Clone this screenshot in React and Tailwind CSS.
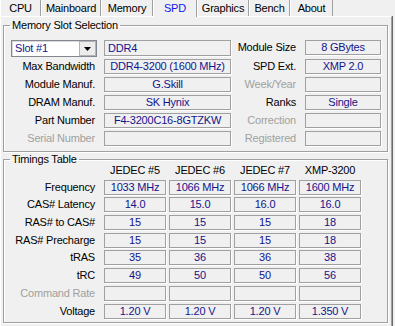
import React from "react";

const tabs = [
  { name: "CPU", w: "w-[41px]" },
  { name: "Mainboard", w: "w-[60px]" },
  { name: "Memory", w: "w-[52px]" },
  { name: "SPD", w: "w-[44px]", active: true },
  { name: "Graphics", w: "w-[52px]" },
  { name: "Bench", w: "w-[41px]" },
  { name: "About", w: "w-[43px]" },
];

const slotRows = [
  { label: "Max Bandwidth", value: "DDR4-3200 (1600 MHz)", rLabel: "SPD Ext.", rValue: "XMP 2.0", gap: "mt-[2px]" },
  { label: "Module Manuf.", value: "G.Skill", rLabel: "Week/Year", rValue: "", rDim: true, gap: "mt-[3px]" },
  { label: "DRAM Manuf.", value: "SK Hynix", rLabel: "Ranks", rValue: "Single", gap: "mt-[3px]" },
  { label: "Part Number", value: "F4-3200C16-8GTZKW", rLabel: "Correction", rValue: "", rDim: true, gap: "mt-[3px]" },
  { label: "Serial Number", value: "", dim: true, rLabel: "Registered", rValue: "", rDim: true, gap: "mt-[3px]" },
];

const timingCols = ["JEDEC #5", "JEDEC #6", "JEDEC #7", "XMP-3200"];

const timingRows = [
  { label: "Frequency", values: ["1033 MHz", "1066 MHz", "1066 MHz", "1600 MHz"], gap: "mt-[3px]" },
  { label: "CAS# Latency", values: ["14.0", "15.0", "16.0", "16.0"], gap: "mt-[2px]" },
  { label: "RAS# to CAS#", values: ["15", "15", "15", "18"], gap: "mt-[3px]" },
  { label: "RAS# Precharge", values: ["15", "15", "15", "18"], gap: "mt-[3px]" },
  { label: "tRAS", values: ["35", "36", "36", "38"], gap: "mt-[2px]" },
  { label: "tRC", values: ["49", "50", "50", "56"], gap: "mt-[3px]" },
  { label: "Command Rate", values: ["", "", "", ""], dim: true, gap: "mt-[3px]" },
  { label: "Voltage", values: ["1.20 V", "1.20 V", "1.20 V", "1.350 V"], gap: "mt-[3px]" },
];

function Field({ children, className = "" }) {
  return (
    <div
      className={`h-[15px] border border-[#a0a0a0] shadow-[1px_1px_0_#fff] flex items-center justify-center whitespace-nowrap text-[#14148c] ${className}`}
    >
      {children}
    </div>
  );
}

function Label({ children, dim, className = "" }) {
  return (
    <div
      className={`text-right whitespace-nowrap pr-[9px] ${dim ? "text-[#a0a0a0]" : "text-black"} ${className}`}
    >
      {children}
    </div>
  );
}

const App = () => {
  return (
    <div className="w-[395px] h-[326px] overflow-hidden bg-[#f0f0f0] font-['Liberation_Sans',Arial,sans-serif] text-[11px] leading-[13px] tracking-[-0.2px] text-black">
      {/* tab strip */}
      <div className="flex items-end h-[16px]">
        {tabs.map((t) =>
          t.active ? (
            <div
              key={t.name}
              className={`${t.w} relative z-10 h-[17px] -mb-px bg-[#f0f0f0] border-l border-white border-r border-r-[#a0a0a0] flex items-start justify-center pt-[2px] text-[#1515ee]`}
            >
              {t.name}
            </div>
          ) : (
            <div
              key={t.name}
              className={`${t.w} h-[16px] border-l border-white border-r border-r-[#a0a0a0] flex items-start justify-center pt-[2px]`}
            >
              {t.name}
            </div>
          )
        )}
      </div>

      {/* page */}
      <div className="w-[392px] h-[320px] border-t border-l border-white border-r border-r-[#a0a0a0] shadow-[1px_0_0_#696969]">
        {/* Memory Slot Selection */}
        <fieldset className="ml-[2px] mt-[2px] w-[385px] border border-[#a0a0a0] shadow-[1px_1px_0_#fff,inset_1px_1px_0_#fff] pt-[8px] pb-[5px]">
          <legend className="ml-[6px] px-[2px]">Memory Slot Selection</legend>

          <div className="flex items-start">
            <div className="ml-[7px] w-[86px] h-[17px] bg-white border border-[#828790] shadow-[inset_1px_1px_0_#d8d8d8] flex items-center">
              <span className="flex-1 pl-[3px] text-[#14148c]">Slot #1</span>
              <div className="w-[17px] h-[15px] bg-[#ececec] border border-[#b4b4b4] flex items-center justify-center">
                <svg width="7" height="4" viewBox="0 0 7 4">
                  <path d="M0 0h7L3.5 4z" fill="#000" />
                </svg>
              </div>
            </div>
            <Field className="ml-[7px] w-[127px] h-[16px] justify-start pl-[3px]">DDR4</Field>
            <Label className="w-[74px] h-[15px] leading-[15px]">Module Size</Label>
            <Field className="w-[76px]">8 GBytes</Field>
          </div>

          {slotRows.map((r) => (
            <div key={r.label} className={`flex items-center ${r.gap}`}>
              <Label dim={r.dim} className="w-[100px]">
                {r.label}
              </Label>
              <Field className="w-[127px]">{r.value}</Field>
              <Label dim={r.rDim} className="w-[74px]">
                {r.rLabel}
              </Label>
              <Field className="w-[76px]">{r.rValue}</Field>
            </div>
          ))}
        </fieldset>

        {/* Timings Table */}
        <fieldset className="ml-[2px] mt-[1px] w-[385px] border border-[#a0a0a0] shadow-[1px_1px_0_#fff,inset_1px_1px_0_#fff] pb-[3px]">
          <legend className="ml-[6px] px-[2px]">Timings Table</legend>

          <div className="flex -mt-[2px] h-[13px] items-center">
            <div className="w-[100px]" />
            <div className="flex gap-[3px]">
              {timingCols.map((c) => (
                <div key={c} className="w-[62px] text-center whitespace-nowrap">
                  {c}
                </div>
              ))}
            </div>
          </div>

          {timingRows.map((r) => (
            <div key={r.label} className={`flex items-center ${r.gap}`}>
              <Label dim={r.dim} className="w-[100px]">
                {r.label}
              </Label>
              <div className="flex gap-[3px]">
                {r.values.map((v, i) => (
                  <Field key={i} className="w-[62px]">
                    {v}
                  </Field>
                ))}
              </div>
            </div>
          ))}
        </fieldset>
      </div>
    </div>
  );
};

export default App;
